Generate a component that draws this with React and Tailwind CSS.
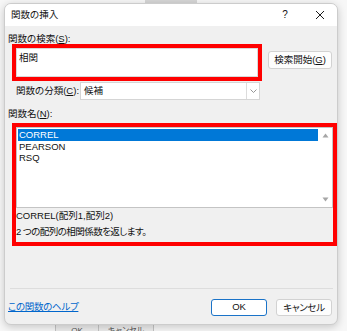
import React from 'react';

function Accel({ k }) {
  return <>(<span className="underline">{k}</span>)</>;
}

function TriUp() {
  return (
    <svg width="7" height="5" viewBox="0 0 7 5"><path d="M3.5 0.5L6.5 4.5H0.5Z" fill="#a6a6a6" /></svg>
  );
}

function TriDown() {
  return (
    <svg width="7" height="5" viewBox="0 0 7 5"><path d="M0.5 0.5H6.5L3.5 4.5Z" fill="#a6a6a6" /></svg>
  );
}

export default function App() {
  return (
    <div lang="ja" className="relative w-[347px] h-[331px] overflow-hidden bg-[#f7f7f7] font-['Liberation_Sans','Noto_Sans_CJK_JP',sans-serif] [font-feature-settings:'palt'] text-[9.5px] text-[#111111]">
      {/* window behind the dialog */}
      <div className="absolute left-[145px] top-0 w-[52px] h-[4px] bg-[#d6d6d6]" />
      <div className="absolute left-[55px] top-[324px] w-[99px] h-[7px] flex border-l border-r border-[#c4c4c4] bg-[#ececec]">
        <div className="w-[43px] border-r border-[#c4c4c4] text-center text-[8px] leading-[14px] text-[#555]">OK</div>
        <div className="flex-1 text-center text-[8px] leading-[14px] text-[#555]">キャンセル</div>
      </div>

      {/* dialog */}
      <div className="absolute left-[4px] top-[3px] w-[334px] h-[322px] rounded-[7px] border border-[#cccccc] bg-[#f0f0f0] shadow-[0_2px_8px_rgba(0,0,0,0.2)] overflow-hidden flex flex-col">
        <div className="h-[22px] bg-white flex items-center pl-[6px] pr-[5px]">
          <span className="leading-[12px]">関数の挿入</span>
          <div className="ml-auto w-[24px] text-center text-[10px] leading-[12px]">?</div>
          <div className="ml-[11px] w-[24px] flex justify-center">
            <svg width="10" height="10" viewBox="0 0 10 10"><path d="M1 1L9 9M9 1L1 9" stroke="#1b1b1b" strokeWidth="1" /></svg>
          </div>
        </div>

        <div className="mt-[7px] h-[11px] leading-[11px] pl-[3px]">関数の検索<Accel k="S" />:</div>

        <div className="flex items-start pl-[7px]">
          <div className="w-[250px] h-[37px] border-4 border-[#ff0000]">
            <div className="h-full bg-white border border-[#d9d9d9] pl-[2px] pt-[3px] leading-[11px]">相関</div>
          </div>
          <button className="ml-[6px] mt-[7px] w-[64px] h-[18px] rounded-[3px] border border-[#d2d2d2] bg-[#fdfdfd] leading-[16px]">
            検索開始<Accel k="G" />
          </button>
        </div>

        <div className="mt-[1px] h-[18px] flex items-center">
          <div className="w-[75px] pl-[11px]">関数の分類<Accel k="C" />:</div>
          <div className="w-[180px] h-[18px] flex bg-white border border-[#d5d5d5]">
            <div className="flex-1 pl-[3px] leading-[16px]">候補</div>
            <div className="w-[13px] border-l border-[#dcdcdc] flex items-center justify-center">
              <svg width="7" height="4" viewBox="0 0 7 4"><path d="M0.5 0.5L3.5 3.5L6.5 0.5" stroke="#8a8a8a" strokeWidth="0.9" fill="none" /></svg>
            </div>
          </div>
        </div>

        <div className="mt-[8px] h-[12px] leading-[12px] pl-[3px]">関数名<Accel k="N" />:</div>

        <div className="ml-[7px] mt-[3px] w-[325px] h-[123px] border-4 border-[#ff0000] flex flex-col">
          <div className="h-[81px] flex bg-white border border-[#c4c4c4]">
            <div className="flex-1 p-[1px]">
              <div className="h-[11.5px] leading-[11.5px] pl-[1px] bg-[#0078d7] text-white">CORREL</div>
              <div className="h-[11.5px] leading-[11.5px] pl-[1px]">PEARSON</div>
              <div className="h-[11.5px] leading-[11.5px] pl-[1px]">RSQ</div>
            </div>
            <div className="w-[13px] flex flex-col items-center justify-between py-[5px]">
              <TriUp />
              <TriDown />
            </div>
          </div>
          <div className="leading-[16px]">CORREL(配列1,配列2)</div>
          <div className="leading-[16px] tracking-[-0.55px]">2 つの配列の相関係数を返します。</div>
        </div>

        <div className="mt-[42px] ml-[5px] mr-[4px] h-px bg-[#dddddd]" />

        <div className="mt-[10px] h-[16px] flex items-center pl-[3px] pr-[5px]">
          <a className="text-[#0066cc] underline leading-[12px] tracking-[-0.3px]">この関数のヘルプ</a>
          <button className="ml-auto w-[56px] h-[17px] rounded-[3px] border-[1.5px] border-[#1a73c8] bg-white leading-[14px]">OK</button>
          <button className="ml-[9px] w-[56px] h-[17px] rounded-[3px] border border-[#d2d2d2] bg-[#fdfdfd] leading-[15px] tracking-[-0.3px]">キャンセル</button>
        </div>
      </div>
    </div>
  );
}
